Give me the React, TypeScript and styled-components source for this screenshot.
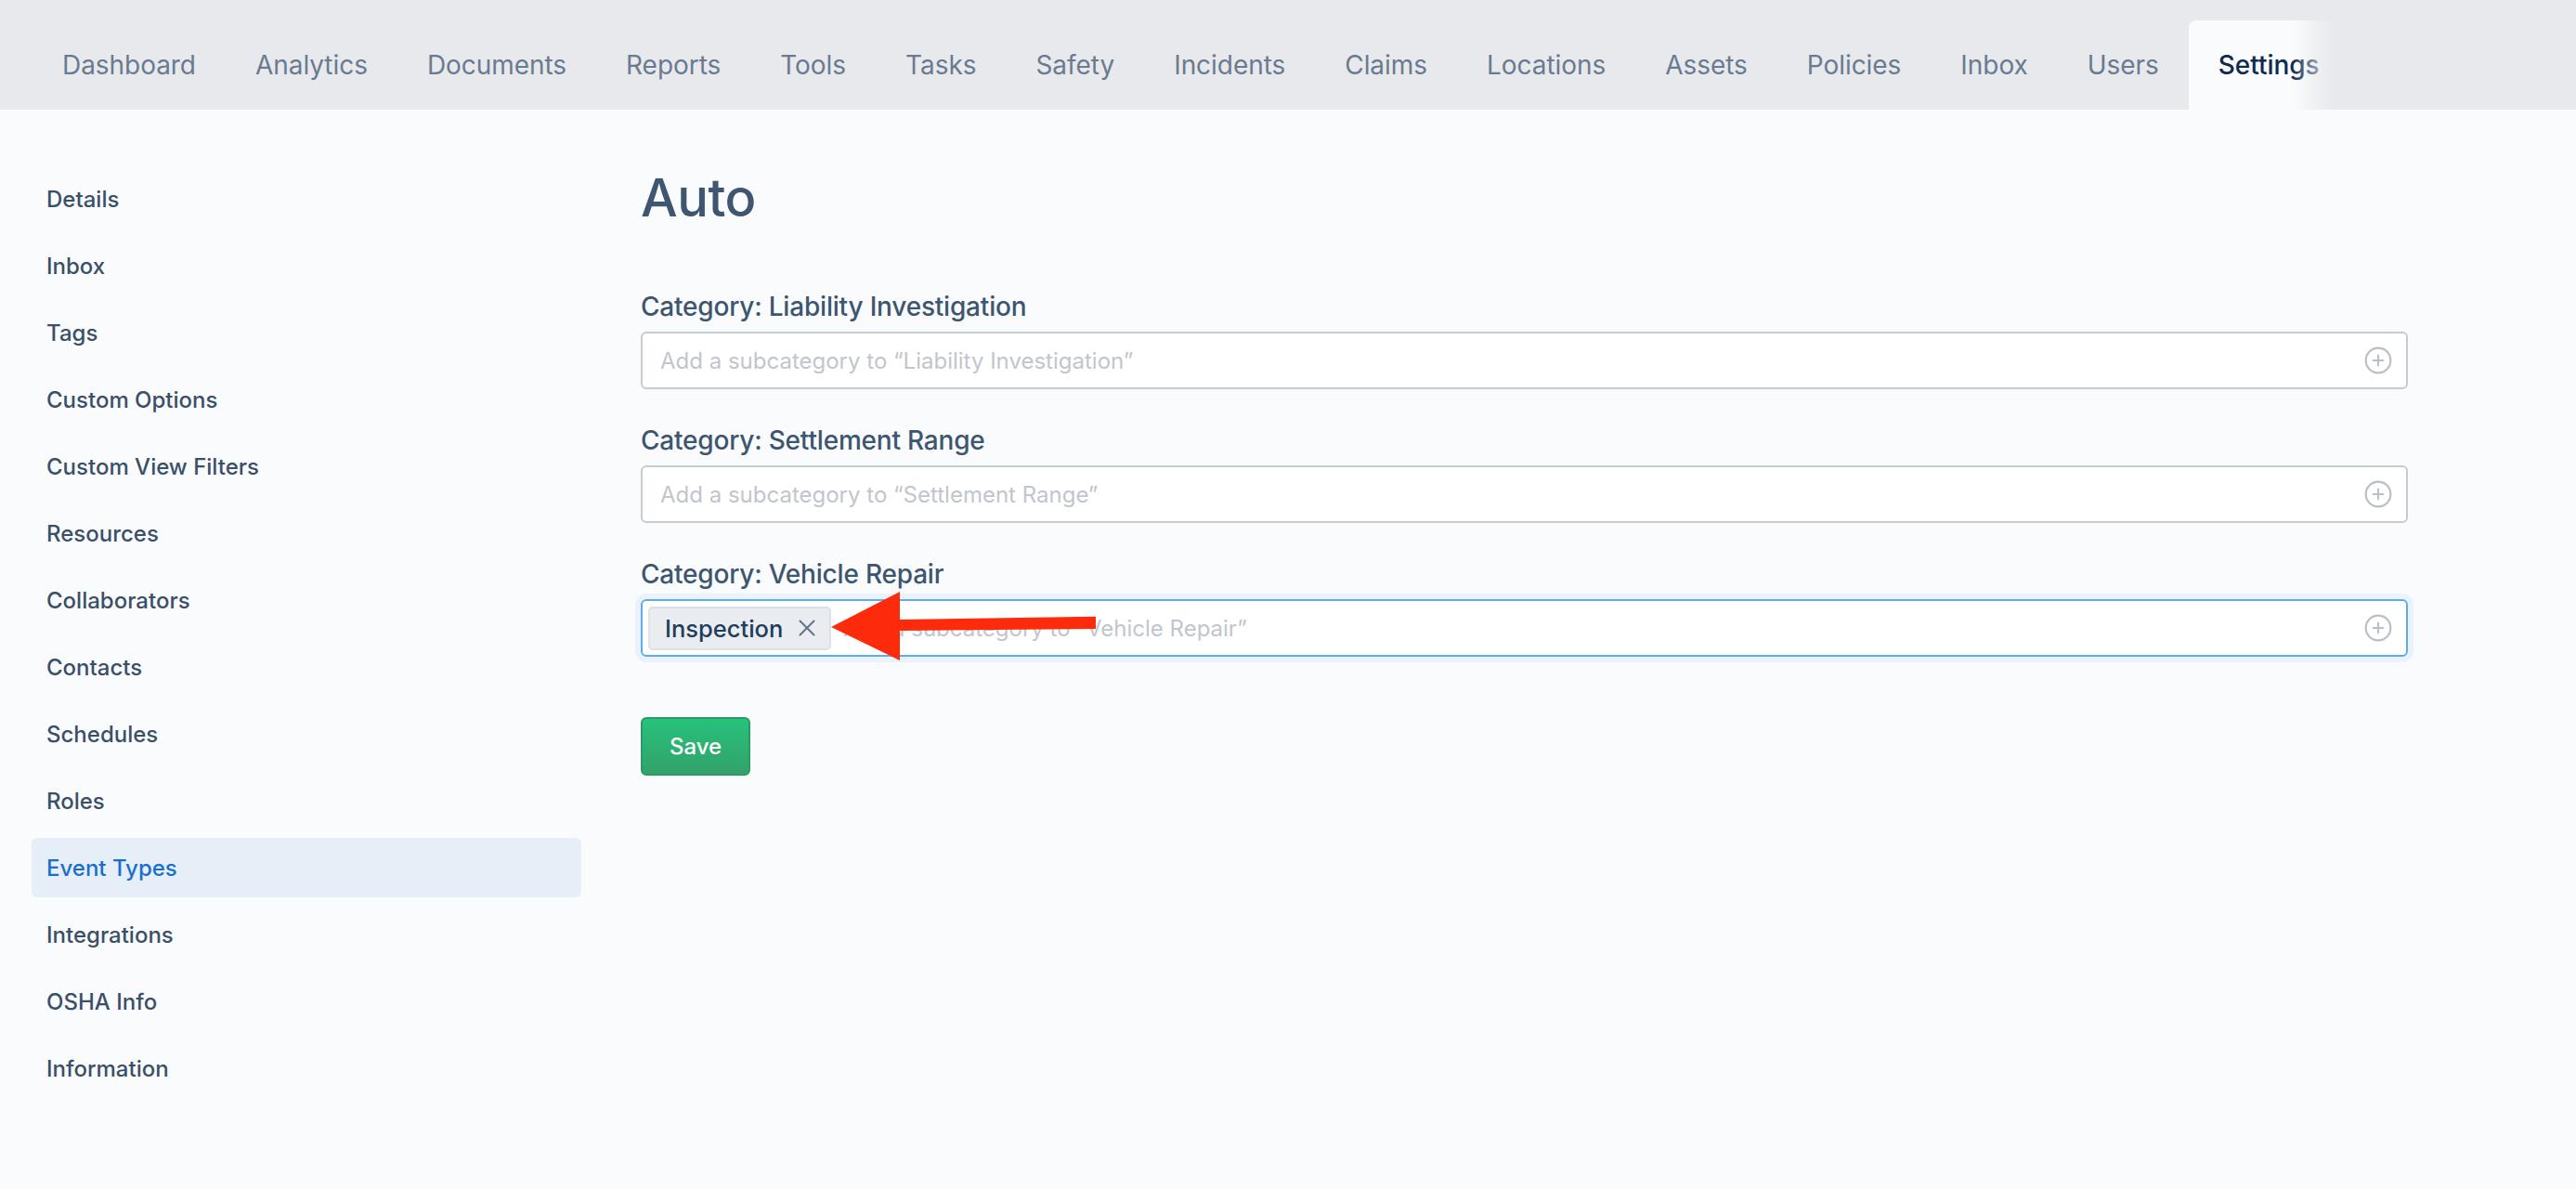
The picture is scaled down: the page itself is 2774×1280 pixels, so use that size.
import styled, {createGlobalStyle} from "styled-components";
import {CirclePlus, X} from "lucide-react";
import {FC} from "react";

const GlobalStyle = createGlobalStyle`
    html, body {
        margin: 0;
        padding: 0;
        background: #f9fbfd;
        font-family: Inter, "Noto Sans", sans-serif;
    }
    * {
        box-sizing: border-box;
    }
`;

const Page = styled.div`
    min-height: 100vh;
    display: flex;
    flex-direction: column;
    background: #f9fbfd;
`;

const TopBar = styled.div`
    height: 118px;
    background: #e8e9ec;
    display: flex;
    align-items: flex-end;
    padding-left: 35px;
`;

const TabStrip = styled.nav`
    position: relative;
    display: flex;
    align-items: flex-end;
    height: 96px;

    &::after {
        content: "";
        position: absolute;
        top: 0;
        right: 0;
        width: 62px;
        height: 100%;
        background: linear-gradient(to right, rgba(232, 233, 236, 0) 0%, #e8e9ec 72%);
        pointer-events: none;
    }
`;

const Tab = styled.div<{ $active?: boolean }>`
    height: 96px;
    display: flex;
    align-items: center;
    padding: 0 32px;
    font-size: 28px;
    letter-spacing: -0.05px;
    font-weight: ${p => (p.$active ? 500 : 400)};
    color: ${p => (p.$active ? "#0e2a4e" : "#6a7b91")};
    background: ${p => (p.$active ? "#f9fbfd" : "transparent")};
    border-radius: 8px 8px 0 0;
    white-space: nowrap;
`;

const Body = styled.div`
    display: flex;
    flex: 1;
`;

const Sidebar = styled.aside`
    width: 626px;
    padding: 64px 0 0 34px;
    display: flex;
    flex-direction: column;
    gap: 8px;
`;

const SideItem = styled.div<{ $active?: boolean }>`
    height: 64px;
    display: flex;
    align-items: center;
    padding-left: 16px;
    border-radius: 6px;
    font-size: 24px;
    font-weight: 500;
    color: ${p => (p.$active ? "#1a6fce" : "#3a4f68")};
    background: ${p => (p.$active ? "#e6eef8" : "transparent")};
`;

const Main = styled.main`
    padding: 62px 0 0 64px;
    width: calc(690px + 1903px - 626px);
`;

const Heading = styled.h1`
    margin: 0 0 63px;
    font-size: 56px;
    line-height: 1.2;
    font-weight: 500;
    letter-spacing: -0.5px;
    color: #3e5670;
`;

const Field = styled.div`
    margin-bottom: 35px;
`;

const Label = styled.div`
    font-size: 28px;
    line-height: 40px;
    font-weight: 500;
    letter-spacing: -0.2px;
    color: #3d5670;
    margin-bottom: 7px;
`;

const InputBox = styled.div<{ $focused?: boolean }>`
    position: relative;
    height: 62px;
    display: flex;
    align-items: center;
    padding: 0 14px 0 6px;
    background: #fff;
    border: 2px solid ${p => (p.$focused ? "#5eacf0" : "#c5cbd1")};
    border-radius: 6px;
    box-shadow: ${p => (p.$focused ? "0 0 0 6px #eaf3fd" : "none")};
`;

const Placeholder = styled.span`
    flex: 1;
    padding-left: 13px;
    font-size: 24px;
    color: #bfc6cd;
    white-space: nowrap;
`;

const Chip = styled.span`
    height: 47px;
    display: flex;
    align-items: center;
    gap: 11px;
    padding: 0 9px 0 16px;
    background: #e9edf1;
    border: 2px solid #dde1e6;
    border-radius: 5px;
    font-size: 25.5px;
    font-weight: 500;
    color: #233c5a;
`;

const ChipClose = styled.span`
    display: flex;
    color: #65738a;
`;

const AddIcon = styled.span`
    display: flex;
    color: #b9bfc6;
`;

const Pointer = styled.svg`
    position: absolute;
    left: 0;
    top: -12px;
    overflow: visible;
    pointer-events: none;
`;

const SaveButton = styled.button`
    margin-top: 30px;
    width: 118px;
    height: 63px;
    border: 2px solid #2d9a64;
    border-radius: 6px;
    background: linear-gradient(#26c27a, #34a16b);
    color: #fff;
    font-family: Inter, "Noto Sans", sans-serif;
    font-size: 24px;
    font-weight: 500;
    cursor: pointer;
`;

const tabs = [
    "Dashboard", "Analytics", "Documents", "Reports", "Tools", "Tasks", "Safety",
    "Incidents", "Claims", "Locations", "Assets", "Policies", "Inbox", "Users", "Settings",
];

const sideItems = [
    "Details", "Inbox", "Tags", "Custom Options", "Custom View Filters", "Resources",
    "Collaborators", "Contacts", "Schedules", "Roles", "Event Types", "Integrations",
    "OSHA Info", "Information",
];

type Category = { name: string; chips: string[]; focused?: boolean };

const categories: Category[] = [
    {name: "Liability Investigation", chips: []},
    {name: "Settlement Range", chips: []},
    {name: "Vehicle Repair", chips: ["Inspection"], focused: true},
];

const App: FC = () => {
    return (
        <Page>
            <GlobalStyle />
            <TopBar>
                <TabStrip>
                    {tabs.map(t => (
                        <Tab key={t} $active={t === "Settings"}>{t}</Tab>
                    ))}
                </TabStrip>
            </TopBar>
            <Body>
                <Sidebar>
                    {sideItems.map(s => (
                        <SideItem key={s} $active={s === "Event Types"}>{s}</SideItem>
                    ))}
                </Sidebar>
                <Main>
                    <Heading>Auto</Heading>
                    {categories.map(c => (
                        <Field key={c.name}>
                            <Label>Category: {c.name}</Label>
                            <InputBox $focused={c.focused}>
                                {c.chips.map(chip => (
                                    <Chip key={chip}>
                                        {chip}
                                        <ChipClose><X size={30} strokeWidth={1.6} /></ChipClose>
                                    </Chip>
                                ))}
                                <Placeholder>Add a subcategory to “{c.name}”</Placeholder>
                                <AddIcon><CirclePlus size={32} strokeWidth={1.6} /></AddIcon>
                                {c.chips.length > 0 && (
                                    <Pointer width="500" height="90" viewBox="0 -12 500 90">
                                        <polygon
                                            fill="#fe2a0c"
                                            points="203,28 277,-10 277,20 488,16.7 488,30 277,32 277,64"
                                        />
                                    </Pointer>
                                )}
                            </InputBox>
                        </Field>
                    ))}
                    <SaveButton>Save</SaveButton>
                </Main>
            </Body>
        </Page>
    );
};

export default App;
